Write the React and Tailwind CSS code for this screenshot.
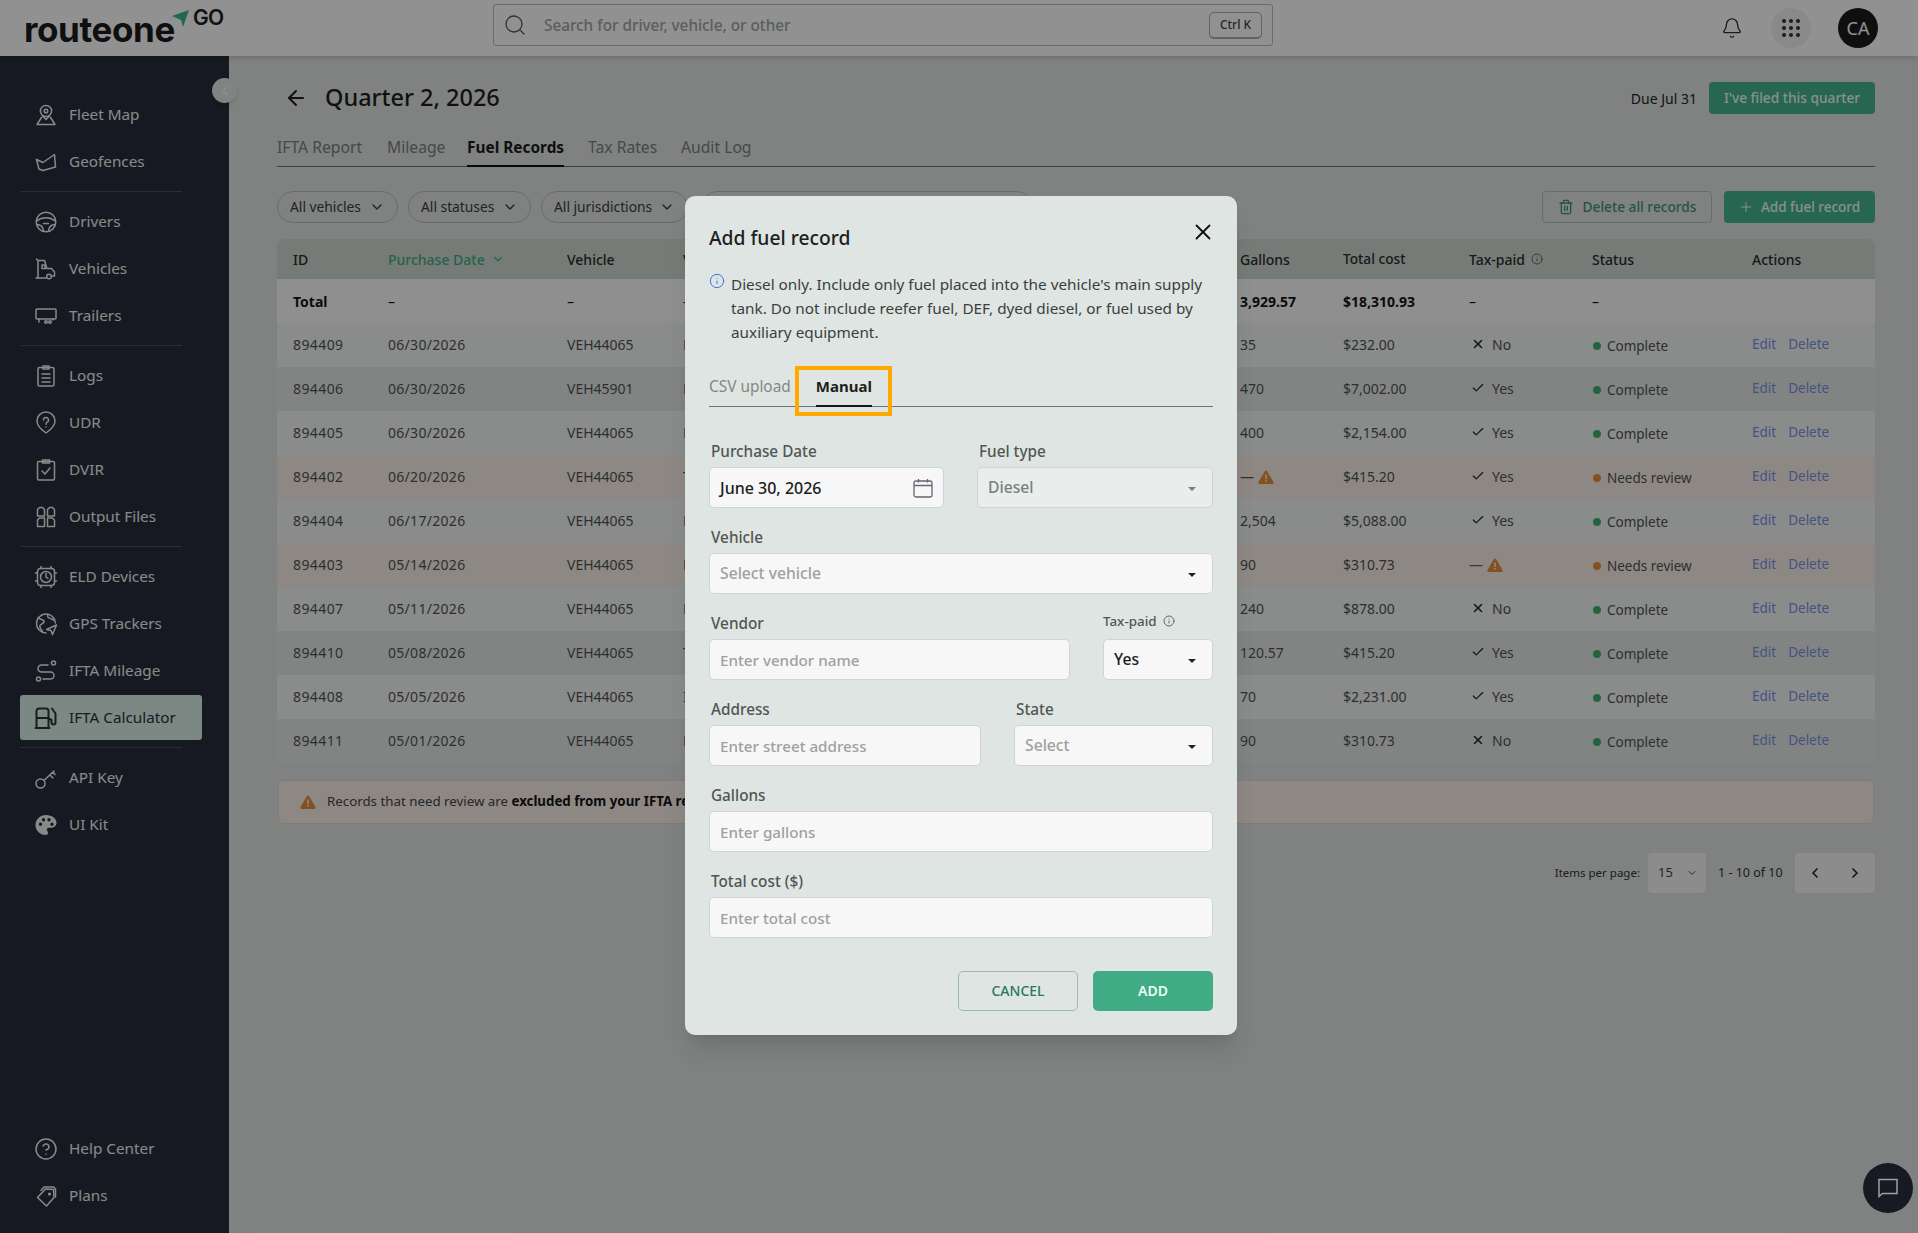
import { useState } from "react";
import { ArrowLeft, Bell, Check, ChevronDown, ChevronLeft, ChevronRight, CircleHelp, Info, Plus, Search, Trash2, X } from "lucide-react";

function Ico({ children, className = "" }) {
  return (
    <svg viewBox="0 0 24 24" fill="none" stroke="currentColor" strokeWidth="1.5" strokeLinecap="round" strokeLinejoin="round" className={`h-6 w-6 shrink-0 ${className}`}>
      {children}
    </svg>
  );
}

const icons = {
  fleet: <Ico><circle cx="12" cy="8" r="5.6" /><circle cx="12" cy="8" r="1.8" /><path d="M8.5 13 12 16.6 15.5 13" /><path d="M7.5 14.5 3 21.5h18l-4.5-7" /></Ico>,
  geo: <Ico><path d="M2.5 9.5 9 12.5 20.5 4.5l1 12.5-12.5 3.5L5 19z" /></Ico>,
  wheel: <Ico><circle cx="12" cy="12" r="9.8" /><path d="M2.8 11c3-2.4 5.8-3.2 9.2-3.2s6.2.8 9.2 3.2" /><path d="M3 14.5c3.5 0 6 2 6.5 6.8M21 14.5c-3.5 0-6 2-6.5 6.8" /><path d="M9.5 13.5h5" /></Ico>,
  truck: <Ico><path d="M4 21V3.5h6.5l2.5 8h4.5l3 3.5v4h-2" /><path d="M4 3.5 2.5 2M4 21H2M4 21h8" /><path d="M8 8h2.5l1 3.5H8z" /><circle cx="15" cy="19.5" r="2.3" /></Ico>,
  trailer: <Ico><rect x="2" y="5" width="20" height="10" rx="1" /><path d="M5 15v3M19 15v1" /><circle cx="12" cy="18" r="1.3" /><circle cx="16" cy="18" r="1.3" /></Ico>,
  logs: <Ico><rect x="4" y="3.5" width="16" height="18.5" rx="1.5" /><path d="M9 2h6v3H9zM8 10h8M8 14h8M8 18h8" /></Ico>,
  udr: <Ico><path d="M12 22c-5-3.5-9-7.5-9-12a9 9 0 0 1 18 0c0 4.5-4 8.5-9 12z" /><path d="M9.5 9a2.5 2.5 0 1 1 3.7 2.2c-.8.5-1.2 1-1.2 2" /><path d="M12 16v.1" /></Ico>,
  dvir: <Ico><rect x="3.5" y="3.5" width="17" height="18.5" rx="1.5" /><path d="M8.5 2h7v3h-7zM8 13l3 3 5-6" /></Ico>,
  files: <Ico><path d="M3.5 11V4.5l2-2h3l2 2V11zM13.5 11V4.5l2-2h3l2 2V11zM3.5 21.5V15l2-2h5v8.5zM13.5 21.5V13h5l2 2v6.5z" /></Ico>,
  eld: <Ico><rect x="3.5" y="3.5" width="17" height="17" rx="3" /><circle cx="12" cy="12" r="5.5" /><path d="M12 8.5V12l2 1.5M7 3.5V1.5M17 3.5V1.5M7 20.5v2M17 20.5v2M1.5 8h2M1.5 16h2M20.5 8h2M20.5 16h2" /></Ico>,
  gps: <Ico><path d="M12 21a9.5 9.5 0 1 1 9.5-10" /><path d="M4 5.5c2 2.5 5 1.500 6 3.500s-3 2.500-4 4.500 1 3.500 2.500 6M14 2.500c-1 2 0 3.500 2.500 4s2.500 1 3 2" /><path d="m22.500 13-10 4.500 4.500 1 1.500 4z" /></Ico>,
  route: <Ico><circle cx="4.5" cy="20" r="2" /><circle cx="19.5" cy="4" r="2" /><path d="M9 20h7.5a3.5 3.5 0 0 0 0-7h-9a3.5 3.5 0 0 1 0-7H14" /></Ico>,
  fuel: <Ico className="stroke-[2]"><path d="M2.5 22V5a2.5 2.5 0 0 1 2.5-2.5h7A2.5 2.5 0 0 1 14.5 5v17zM1.5 22h14M2.5 12h12" /><path d="M18 2.5l3.5 5v9a2 2 0 0 1-4 0V14l-3-1.500" /></Ico>,
  key: <Ico><circle cx="6.5" cy="17.5" r="4.5" /><path d="m10 14.5 10-9.5M16 9l3 3M19 6l2 2.5" /></Ico>,
  palette: <svg viewBox="0 0 24 24" className="h-6 w-6 shrink-0" fill="currentColor"><path fillRule="evenodd" d="M12 2C6 2 1.5 6.5 1.5 12S6 22 11.5 22c1.5 0 2.5-1 2.5-2.300 0-.6-.2-1.100-.6-1.600-.4-.4-.6-.9-.6-1.400 0-1.100.9-1.900 2-1.900h2.400c3.200 0 5.300-2.300 5.300-5C22.500 5.600 17.800 2 12 2zM6.500 13a1.700 1.700 0 1 1 0-3.400 1.700 1.700 0 0 1 0 3.400zm3-4.500a1.700 1.700 0 1 1 0-3.400 1.700 1.700 0 0 1 0 3.400zm5.500 0a1.700 1.700 0 1 1 0-3.400 1.700 1.700 0 0 1 0 3.400zm3 4.500a1.700 1.700 0 1 1 0-3.400 1.700 1.700 0 0 1 0 3.400z" /></svg>,
  help: <CircleHelp className="h-6 w-6 shrink-0" strokeWidth={1.5} />,
  tags: <Ico><path d="M3.5 13.5 11.5 5l8 .5.5 8-7.5 8.5z" /><path d="M7 6.5 10 3h9.5l2 2v8" /><circle cx="15.5" cy="10" r=".8" fill="currentColor" /></Ico>,
};

const navGroups = [
  [["Fleet Map", "fleet"], ["Geofences", "geo"]],
  [["Drivers", "wheel"], ["Vehicles", "truck"], ["Trailers", "trailer"]],
  [["Logs", "logs"], ["UDR", "udr"], ["DVIR", "dvir"], ["Output Files", "files"]],
  [["ELD Devices", "eld"], ["GPS Trackers", "gps"], ["IFTA Mileage", "route"], ["IFTA Calculator", "fuel"]],
  [["API Key", "key"], ["UI Kit", "palette"]],
];

function NavItem({ label, icon }) {
  const active = label === "IFTA Calculator";
  return (
    <div className={`flex h-[45px] items-center gap-[11px] rounded-[3px] pl-[14px] text-[15.3px] ${active ? "bg-[#d8f0e8] text-[#2c3238]" : "text-[#f0f2f2]"}`}>
      {icons[icon]}
      <span>{label}</span>
    </div>
  );
}

function Sidebar() {
  return (
    <aside className="relative flex w-[229px] shrink-0 flex-col justify-between bg-[#282d3b] pb-[15px] pl-5 pr-[27px] pt-[36px]">
      <div>
        {navGroups.map((group, i) => (
          <div key={i}>
            {i > 0 && <div className="my-[7px] mr-5 h-px bg-[#4a505e]" />}
            <div className="flex flex-col gap-[2px]">
              {group.map(([label, icon]) => (
                <NavItem key={label} label={label} icon={icon} />
              ))}
            </div>
          </div>
        ))}
      </div>
      <div className="flex flex-col gap-[2px]">
        <NavItem label="Help Center" icon="help" />
        <NavItem label="Plans" icon="tags" />
      </div>
      <div className="absolute left-[212px] top-[22px] flex h-[25px] w-[25px] items-center justify-center rounded-full bg-[#e2e6e4] text-white shadow-md">
        <ChevronLeft className="h-4 w-4" />
      </div>
    </aside>
  );
}

function Header() {
  return (
    <header className="relative z-[1] flex h-14 items-start bg-white shadow-md">
      <div className="flex h-14 w-[493px] shrink-0 items-start pl-6">
        <span className="mt-[11px] text-[35px] font-bold leading-[36px] tracking-[-0.4px] text-[#1c1c1c] font-['Inter',sans-serif]">routeone</span>
        <svg viewBox="0 0 18 18" className="ml-[-3px] mt-[10px] h-[18px] w-[18px] shrink-0">
          <path d="M0 6 17 0 11 17 9 10z" fill="#37b98a" />
        </svg>
        <span className="ml-[3px] mt-[6px] text-[21px] font-semibold leading-[24px] tracking-[-0.5px] text-[#222] font-['Inter',sans-serif]">GO</span>
      </div>
      <div className="mt-1 flex h-[42px] w-[780px] items-center rounded-[3px] border border-[#b9bebc] pl-[9px] pr-[10px]">
        <Search className="h-6 w-6 text-[#555]" strokeWidth={1.3} />
        <span className="ml-[17px] flex-1 text-[15.3px] font-medium text-[#9fa5a3]">Search for driver, vehicle, or other</span>
        <span className="flex h-[27px] w-[53px] items-center justify-center rounded-[5px] border border-b-2 border-[#a9aeac] text-[12px] font-medium text-[#444]">Ctrl K</span>
      </div>
      <div className="ml-auto mt-2 flex items-center pr-10">
        <Bell className="h-[22px] w-[22px] text-[#333]" strokeWidth={1.5} />
        <div className="ml-[28px] flex h-10 w-10 items-center justify-center rounded-full bg-[#f1f1f1]">
          <div className="grid grid-cols-3 gap-[3px]">
            {Array.from({ length: 9 }).map((_, i) => (
              <span key={i} className="h-1 w-1 rounded-full bg-[#333]" />
            ))}
          </div>
        </div>
        <div className="ml-[27px] flex h-10 w-10 items-center justify-center rounded-full bg-[#1b1b1b] text-[18px] text-white">CA</div>
      </div>
    </header>
  );
}

const rows = [
  ["894409", "06/30/2026", "VEH44065", "Pilot", "35", "$232.00", "no", "ok", "l"],
  ["894406", "06/30/2026", "VEH45901", "Pilot", "470", "$7,002.00", "yes", "ok", "d"],
  ["894405", "06/30/2026", "VEH44065", "Pilot", "400", "$2,154.00", "yes", "ok", "l"],
  ["894402", "06/20/2026", "VEH44065", "TA", "warn", "$415.20", "yes", "rev", "o"],
  ["894404", "06/17/2026", "VEH44065", "Pilot", "2,504", "$5,088.00", "yes", "ok", "l"],
  ["894403", "05/14/2026", "VEH44065", "Pilot", "90", "$310.73", "warn", "rev", "o"],
  ["894407", "05/11/2026", "VEH44065", "Pilot", "240", "$878.00", "no", "ok", "l"],
  ["894410", "05/08/2026", "VEH44065", "TA", "120.57", "$415.20", "yes", "ok", "d"],
  ["894408", "05/05/2026", "VEH44065", "Ideal", "70", "$2,231.00", "yes", "ok", "l"],
  ["894411", "05/01/2026", "VEH44065", "Pilot", "90", "$310.73", "no", "ok", "d"],
];

const cols = "grid grid-cols-[95px_179px_116px_557px_103px_126px_123px_160px_139px] items-center";
const rowBg = { l: "bg-[#f3f4f4]", d: "bg-[#e5e9e9]", o: "bg-[#f8f0e8]" };

function Warn({ className = "" }) {
  return (
    <svg viewBox="0 0 16 14" className={`h-[14px] w-4 ${className}`}>
      <path fillRule="evenodd" d="M8 .5c.5 0 .9.3 1.2.8l6.3 10.8c.5.9 0 1.9-1 1.9H1.500c-1 0-1.500-1-1-1.900L6.800 1.300C7.100.8 7.500.5 8 .5zM7.200 4.500v4.500h1.600V4.500zM7.200 10v1.600h1.600V10z" fill="#e98f3e" />
    </svg>
  );
}

function TaxCell({ v }) {
  if (v === "warn") {
    return <span className="flex items-center gap-1"><span className="text-[#666]">—</span><Warn /></span>;
  }
  return (
    <span className="-mt-px flex items-center gap-[7px] pl-[2px]">
      {v === "yes" ? <Check className="h-[14px] w-[14px] text-[#222]" strokeWidth={2} /> : <X className="h-[14px] w-[14px] text-[#222]" strokeWidth={2.5} />}
      {v === "yes" ? "Yes" : "No"}
    </span>
  );
}

function Table() {
  return (
    <div className="mt-4 overflow-hidden rounded-[8px] text-[14px] text-[#4f5453]">
      <div className={`${cols} h-10 bg-[#d1d8d4] font-medium text-[#2a2c2c] [&>div]:pl-4`}>
        <div>ID</div>
        <div className="flex items-center gap-[6px] text-[#3fae87]">Purchase Date <ChevronDown className="h-[14px] w-[14px]" /></div>
        <div>Vehicle</div>
        <div>Vendor</div>
        <div>Gallons</div>
        <div className="text-[13.7px]">Total cost</div>
        <div className="flex items-center gap-[6px]">Tax-paid <Info className="h-3 w-3 text-[#666]" /></div>
        <div>Status</div>
        <div>Actions</div>
      </div>
      <div className={`${cols} h-11 bg-[#fcfcfc] font-bold text-[#151515] [&>div]:pl-4`}>
        <div>Total</div>
        <div className="font-normal">–</div>
        <div className="font-normal">–</div>
        <div className="font-normal">–</div>
        <div>3,929.57</div>
        <div>$18,310.93</div>
        <div className="font-normal">–</div>
        <div className="font-normal">–</div>
        <div />
      </div>
      {rows.map((r) => (
        <div key={r[0]} className={`${cols} h-11 ${rowBg[r[8]]} [&>div]:pb-px [&>div]:pl-4`}>
          <div className="tracking-[0.4px]">{r[0]}</div>
          <div className="tracking-[0.3px]">{r[1]}</div>
          <div>{r[2]}</div>
          <div>{r[3]}</div>
          <div>{r[4] === "warn" ? <span className="flex items-center gap-1"><span>—</span><Warn /></span> : r[4]}</div>
          <div>{r[5]}</div>
          <div><TaxCell v={r[6]} /></div>
          <div className="mt-[3px] flex items-center gap-[6px]">
            <span className={`ml-[1px] h-2 w-2 rounded-full ${r[7] === "ok" ? "bg-[#3fae72]" : "bg-[#e98f3e]"}`} />
            <span className="text-[13.5px]">{r[7] === "ok" ? "Complete" : "Needs review"}</span>
          </div>
          <div className="flex gap-3 text-[13.5px] text-[#7b90e6]"><span>Edit</span><span>Delete</span></div>
        </div>
      ))}
    </div>
  );
}

function Pill({ children, width }) {
  return (
    <div className={`flex h-8 items-center justify-between rounded-full border border-[#b9bebc] pl-3 pr-3 text-[13.8px] text-[#3a3d3c] ${width}`}>
      {children}
      <ChevronDown className="h-4 w-4" strokeWidth={2} />
    </div>
  );
}

function Content() {
  return (
    <main className="min-w-0 flex-1 pl-12 pr-[43px] pt-[26px]">
      <div className="flex h-8 items-center">
        <ArrowLeft className="ml-[7px] h-6 w-6 text-[#1f1f1f]" strokeWidth={2} />
        <h1 className="ml-[17px] text-[23.5px] font-medium text-[#1f1f1f]">Quarter 2, 2026</h1>
        <span className="ml-auto text-[14px] text-[#262626]">Due Jul 31</span>
        <button className="ml-3 h-8 w-[166px] rounded-[4px] bg-[#45b48e] text-[13.7px] font-medium text-[#f0fff9]">I've filed this quarter</button>
      </div>

      <div className="mt-4 flex h-[37px] gap-6 whitespace-nowrap border-b border-[#6e7371] text-[15.7px] text-[#7b807e]">
        <span className="w-[86px] pt-[6px]">IFTA Report</span>
        <span className="w-[56px] pt-[6px]">Mileage</span>
        <span className="-mb-px w-[97px] border-b-2 border-[#111] pt-[6px] text-[15.4px] font-bold text-[#1c1c1c]">Fuel Records</span>
        <span className="w-[69px] pt-[6px]">Tax Rates</span>
        <span className="w-[68px] pt-[6px]">Audit Log</span>
      </div>

      <div className="mt-6 flex items-center">
        <Pill width="w-[121px]">All vehicles</Pill>
        <div className="ml-[10px]"><Pill width="w-[123px]">All statuses</Pill></div>
        <div className="ml-[10px]"><Pill width="w-[147px]">All jurisdictions</Pill></div>
        <div className="ml-[13px] h-8 w-[332px] rounded-full border border-[#b9bebc]" />
        <button className="ml-auto flex h-8 w-[170px] items-center justify-center gap-[9px] rounded-[4px] border border-[#a2c9ba] text-[13.7px] font-medium text-[#3f9577]">
          <Trash2 className="h-4 w-4" />
          Delete all records
        </button>
        <button className="ml-3 flex h-8 w-[151px] items-center gap-[7px] rounded-[4px] bg-[#45b48e] pl-[14px] text-[13.5px] font-medium text-[#f0fff9]">
          <Plus className="h-4 w-4" strokeWidth={1.5} />
          Add fuel record
        </button>
      </div>

      <Table />

      <div className="ml-px mr-px mt-[17px] flex h-[44px] items-center gap-[11px] rounded-[6px] border border-[#e3d8cf] bg-[#f8f0e8] pl-[21px] text-[13.3px] text-[#444]">
        <Warn />
        <span className="whitespace-nowrap">Records that need review are <b className="text-[#151515]">excluded from your IFTA report</b></span>
      </div>

      <div className="mt-[29px] flex items-center justify-end">
        <span className="whitespace-nowrap text-[11.5px] text-[#333]">Items per page:</span>
        <div className="ml-2 flex h-10 w-[58px] items-center justify-between rounded-[4px] bg-[#f6f6f6] pl-[10px] pr-2 text-[13px] text-[#444]">
          15
          <ChevronDown className="h-3 w-3" />
        </div>
        <span className="ml-3 w-[65px] whitespace-nowrap text-[12.5px] text-[#333]">1 - 10 of 10</span>
        <div className="ml-3 flex h-10 w-20 items-center justify-around rounded-[4px] bg-[#f6f6f6] text-[#222]">
          <ChevronLeft className="h-4 w-4" strokeWidth={2.5} />
          <ChevronRight className="h-4 w-4" strokeWidth={2.5} />
        </div>
      </div>
    </main>
  );
}

function Field({ label, className = "", labelClass = "", children }) {
  return (
    <div className={className}>
      <div className={`mb-[5px] flex h-[22px] items-center pl-[2px] text-[15.3px] font-medium text-[#505654] ${labelClass}`}>{label}</div>
      {children}
    </div>
  );
}

const inputCls = "block h-[41px] w-full rounded-[5px] border border-[#cfd5d7] bg-[#f7f7f7] px-[10px] text-[15.2px] font-medium text-[#1c1c1c] outline-none placeholder:text-[#a0a0a0]";

function Select({ value, muted, disabled }) {
  return (
    <div className={`flex h-[41px] items-center justify-between rounded-[5px] border border-[#cfd5d7] pl-[10px] pr-[16px] text-[15.7px] font-medium ${disabled ? "bg-[#e9eeec] text-[#778280]" : "bg-[#f7f7f7]"} ${muted ? "text-[#a0a0a0]" : ""} ${!disabled && !muted ? "text-[#1c1c1c]" : ""}`}>
      {value}
      <span className={`mt-[2px] h-0 w-0 border-x-[4px] border-t-[4px] border-x-transparent ${disabled ? "border-t-[#778280]" : "border-t-[#222]"}`} />
    </div>
  );
}

function Modal() {
  const [date] = useState("June 30, 2026");
  return (
    <div className="absolute left-[685px] top-[196px] z-20 h-[839px] w-[552px] rounded-[10px] bg-[#dfe5e2] px-6 pt-7 shadow-xl">
      <div className="flex h-7 items-center justify-between">
        <h2 className="text-[19.25px] font-medium text-[#1c1f1f]">Add fuel record</h2>
        <X className="-mr-[3px] -mt-3 h-[26px] w-[26px] text-[#111]" strokeWidth={1.7} />
      </div>

      <div className="mt-5 flex">
        <Info className="mr-[6px] mt-[1px] h-4 w-4 shrink-0 text-[#3d74e0]" strokeWidth={1.5} />
        <p className="text-[15.3px] leading-6 text-[#3a3f3e]">
          Diesel only. Include only fuel placed into the vehicle's main supply tank. Do not include reefer fuel, DEF, dyed diesel, or fuel used by auxiliary equipment.
        </p>
      </div>

      <div className="relative mt-[27px] flex h-9 border-b border-[#6e7371] text-[15.4px]">
        <span className="pt-[4px] text-[#7f8885]">CSV upload</span>
        <span className="-mb-px ml-[25px] border-b-2 border-[#151515] pt-[4px] text-[15px] font-bold text-[#1c1f1f]">Manual</span>
        <div className="absolute left-[86px] top-[-5px] h-[50px] w-[97px] border-[4px] border-[#ffa900]" />
      </div>

      <div className="mt-[33px] flex flex-col gap-[18px]">
        <div className="flex gap-[33px]">
          <Field label="Purchase Date" className="w-[235px]">
            <div className={`${inputCls} flex items-center justify-between !text-[16px]`}>
              {date}
              <svg viewBox="0 0 20 20" className="h-5 w-5 text-[#667]" fill="none" stroke="currentColor" strokeWidth="1.3">
                <rect x="1" y="3" width="18" height="16" rx="2" />
                <path d="M1 7.5h18M5.5 1v3.5M14.5 1v3.5" />
              </svg>
            </div>
          </Field>
          <Field label="Fuel type" className="flex-1">
            <Select value="Diesel" disabled />
          </Field>
        </div>
        <Field label="Vehicle">
          <Select value="Select vehicle" muted />
        </Field>
        <div className="flex gap-[33px]">
          <Field label="Vendor" className="w-[361px]">
            <input readOnly className={inputCls} placeholder="Enter vendor name" />
          </Field>
          <Field
            label={<span className="flex items-center gap-[6px]">Tax-paid <Info className="h-3 w-3 text-[#666]" /></span>}
            labelClass="!mb-[7px] -mt-[2px] !pl-0 !text-[13.4px]"
            className="flex-1"
          >
            <Select value="Yes" />
          </Field>
        </div>
        <div className="flex gap-[33px]">
          <Field label="Address" className="w-[272px]">
            <input readOnly className={inputCls} placeholder="Enter street address" />
          </Field>
          <Field label="State" className="flex-1">
            <Select value="Select" muted />
          </Field>
        </div>
        <Field label="Gallons">
          <input readOnly className={inputCls} placeholder="Enter gallons" />
        </Field>
        <Field label="Total cost ($)">
          <input readOnly className={inputCls} placeholder="Enter total cost" />
        </Field>
      </div>

      <div className="mt-[33px] flex justify-end gap-[15px]">
        <button className="h-10 w-[120px] rounded-[5px] border border-[#96bdae] pb-px text-[14px] font-medium text-[#26795d]">CANCEL</button>
        <button className="h-10 w-[120px] rounded-[5px] bg-[#41ab86] pb-px text-[14px] font-semibold text-[#e8fff6]">ADD</button>
      </div>
    </div>
  );
}

export default function App() {
  return (
    <div className="relative h-[1233px] overflow-hidden bg-[#dfe5e2] font-['Noto_Sans',sans-serif]">
      <Header />
      <div className="flex h-[1177px]">
        <Sidebar />
        <Content />
      </div>
      {/* dim layer behind the dialog */}
      <div className="absolute inset-0 z-10 bg-black/[0.43]" />
      <Modal />
      <div className="absolute bottom-5 right-[5px] z-20 flex h-[50px] w-[50px] items-center justify-center rounded-full bg-[#171a22] text-[#a0a0a0]">
        <svg viewBox="0 0 20 20" className="h-5 w-5" fill="none" stroke="currentColor" strokeWidth="1.5">
          <path d="M1 1.5h18v14H4.5L1 18.5z" />
        </svg>
      </div>
    </div>
  );
}
